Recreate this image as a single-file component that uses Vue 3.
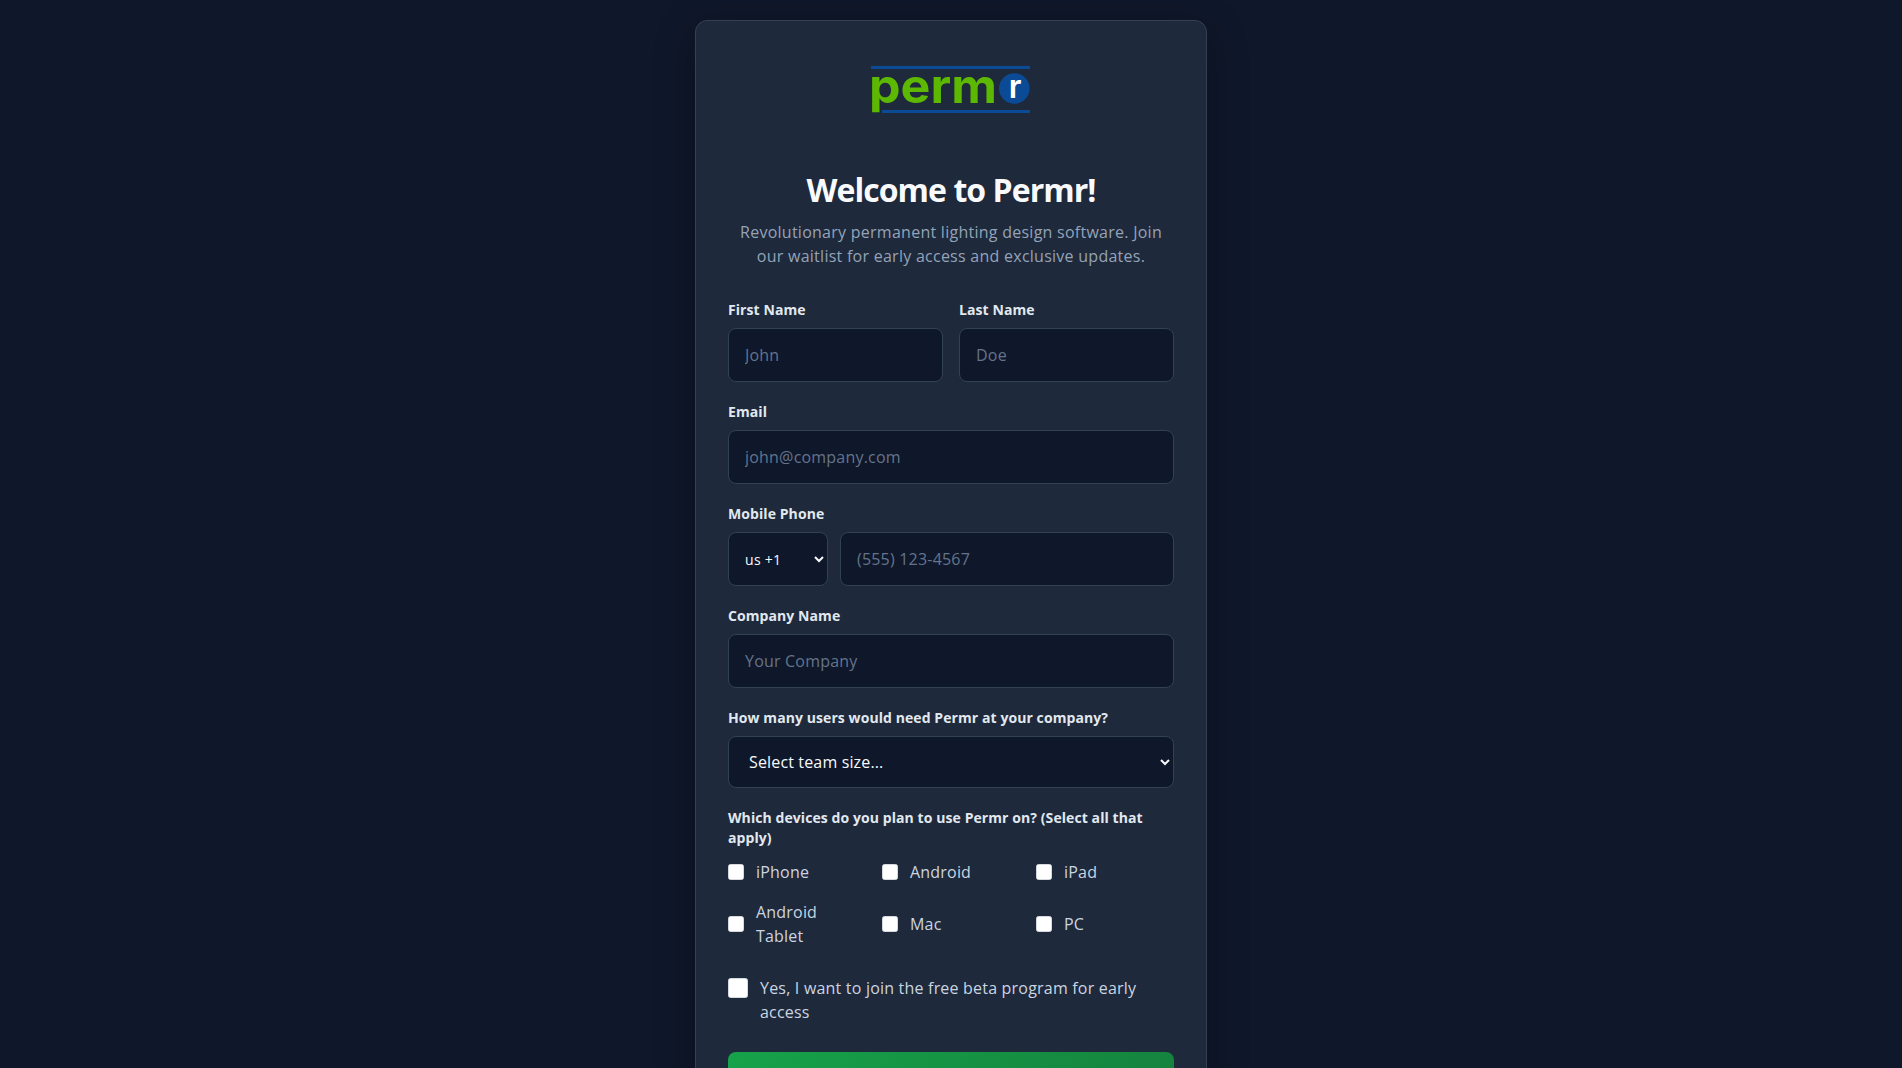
<script setup>
const devices = ['iPhone', 'Android', 'iPad', 'Android Tablet', 'Mac', 'PC']
</script>

<template>
  <main class="page">
    <section class="card">
      <div class="logo-wrap">
        <svg class="logo" viewBox="0 0 160 48" width="160" height="48" role="img" aria-label="permr">
          <rect x="0" y="0" width="159" height="3" fill="#0b4a94" />
          <rect x="11" y="44" width="148" height="3" fill="#0b4a94" />
          <text x="-2" y="37" class="logo-text" textLength="128" lengthAdjust="spacingAndGlyphs">perm</text>
          <circle cx="143.3" cy="22.5" r="15.3" fill="#0b4a94" />
          <text x="144" y="32" class="logo-r" text-anchor="middle">r</text>
        </svg>
      </div>

      <h1>Welcome to Permr!</h1>
      <p class="sub">Revolutionary permanent lighting design software. Join our waitlist for early access and exclusive updates.</p>

      <form class="form" @submit.prevent>
        <div class="two">
          <div class="field">
            <label>First Name</label>
            <input type="text" placeholder="John" />
          </div>
          <div class="field">
            <label>Last Name</label>
            <input type="text" placeholder="Doe" />
          </div>
        </div>
        <div class="field">
          <label>Email</label>
          <input type="email" placeholder="john@company.com" />
        </div>
        <div class="field">
          <label>Mobile Phone</label>
          <div class="phone">
            <select class="code"><option>us +1</option></select>
            <input type="tel" placeholder="(555) 123-4567" />
          </div>
        </div>
        <div class="field">
          <label>Company Name</label>
          <input type="text" placeholder="Your Company" />
        </div>
        <div class="field">
          <label>How many users would need Permr at your company?</label>
          <select class="size"><option>Select team size...</option></select>
        </div>
        <div class="field">
          <label class="devices-label">Which devices do you plan to use Permr on? (Select all that apply)</label>
          <div class="devices">
            <label v-for="d in devices" :key="d" class="device">
              <input type="checkbox" />
              <span>{{ d }}</span>
            </label>
          </div>
        </div>
        <label class="beta">
          <input type="checkbox" />
          <span>Yes, I want to join the free beta program for early access</span>
        </label>
        <button type="submit" class="submit">Join the Waitlist</button>
      </form>
    </section>
  </main>
</template>

<style>
html, body { margin: 0; background: #0f172a; }
</style>

<style scoped>
.page {
  min-height: 100vh;
  box-sizing: border-box;
  padding: 20px 16px;
  display: flex;
  justify-content: center;
  align-items: flex-start;
  background: #0f172a;
  font-family: "Open Sans", "Noto Sans", sans-serif;
}
.card {
  width: 512px;
  box-sizing: border-box;
  padding: 32px;
  background: #1e293b;
  border: 1px solid #334155;
  border-radius: 12px;
  box-shadow: 0 10px 40px rgba(0, 0, 0, 0.3);
}
.logo-wrap { display: flex; justify-content: center; padding: 13px 0 58px; }
.logo { display: block; overflow: visible; }
.logo-text { font-family: "Inter", sans-serif; font-weight: 700; font-size: 48px; fill: #5cb800; }
.logo-r { font-family: "Inter", sans-serif; font-weight: 600; font-size: 32px; fill: #ffffff; }
h1 {
  margin: 0 0 12px;
  text-align: center;
  font-size: 32px;
  line-height: 36px;
  font-weight: 700;
  letter-spacing: -0.95px;
  color: #f8fafc;
}
.sub {
  margin: 0 0 32px;
  text-align: center;
  font-size: 16px;
  line-height: 24px;
  letter-spacing: 0.26px;
  color: #94a3b8;
}
.form { display: flex; flex-direction: column; gap: 20px; }
.two { display: grid; grid-template-columns: 1fr 1fr; gap: 16px; }
.field { display: flex; flex-direction: column; min-width: 0; }
.field > label {
  display: block;
  margin-bottom: 8px;
  font-size: 14px;
  line-height: 20px;
  font-weight: 700;
  letter-spacing: 0.08px;
  color: #e2e8f0;
}
.field > label.devices-label { margin-bottom: 12px; }
input[type="text"], input[type="email"], input[type="tel"] {
  box-sizing: border-box;
  width: 100%;
  min-width: 0;
  height: 54px;
  padding: 0 16px;
  background: #0f172a;
  border: 1px solid #334155;
  border-radius: 8px;
  color: #f8fafc;
  font: inherit;
  font-size: 16px;
  letter-spacing: 0.2px;
}
input::placeholder { color: #64748b; opacity: 1; }
select {
  box-sizing: border-box;
  background: #0f172a;
  border: 1px solid #334155;
  border-radius: 8px;
  color: #f8fafc;
  font-family: inherit;
}
.phone { display: flex; gap: 12px; }
.code { flex: 0 0 100px; width: 100px; height: 54px; padding: 0 12px; font-size: 14px; letter-spacing: 0.3px; }
.size { width: 100%; height: 52px; padding: 0 16px; font-size: 16px; letter-spacing: 0.15px; }
.devices { display: grid; grid-template-columns: repeat(3, 1fr); gap: 16px; }
input[type="checkbox"] {
  appearance: none;
  flex: none;
  box-sizing: border-box;
  margin: 0;
  background: #ffffff;
  border: 1px solid #d5dae1;
  border-radius: 2.5px;
}
.device {
  display: flex;
  align-items: center;
  gap: 12px;
  font-size: 16px;
  line-height: 24px;
  letter-spacing: 0.2px;
  color: #cbd5e1;
}
.device input[type="checkbox"] { width: 16px; height: 16px; }
.beta {
  display: flex;
  align-items: flex-start;
  gap: 12px;
  margin-top: 8px;
  font-size: 16px;
  line-height: 24px;
  letter-spacing: 0.2px;
  color: #cbd5e1;
}
.beta input[type="checkbox"] { width: 20px; height: 20px; margin-top: 2px; }
.submit {
  margin-top: 8px;
  height: 56px;
  border: 0;
  border-radius: 8px;
  background: linear-gradient(135deg, #16a34a, #15803d);
  color: #ffffff;
  font: inherit;
  font-size: 18px;
  font-weight: 600;
}
</style>
